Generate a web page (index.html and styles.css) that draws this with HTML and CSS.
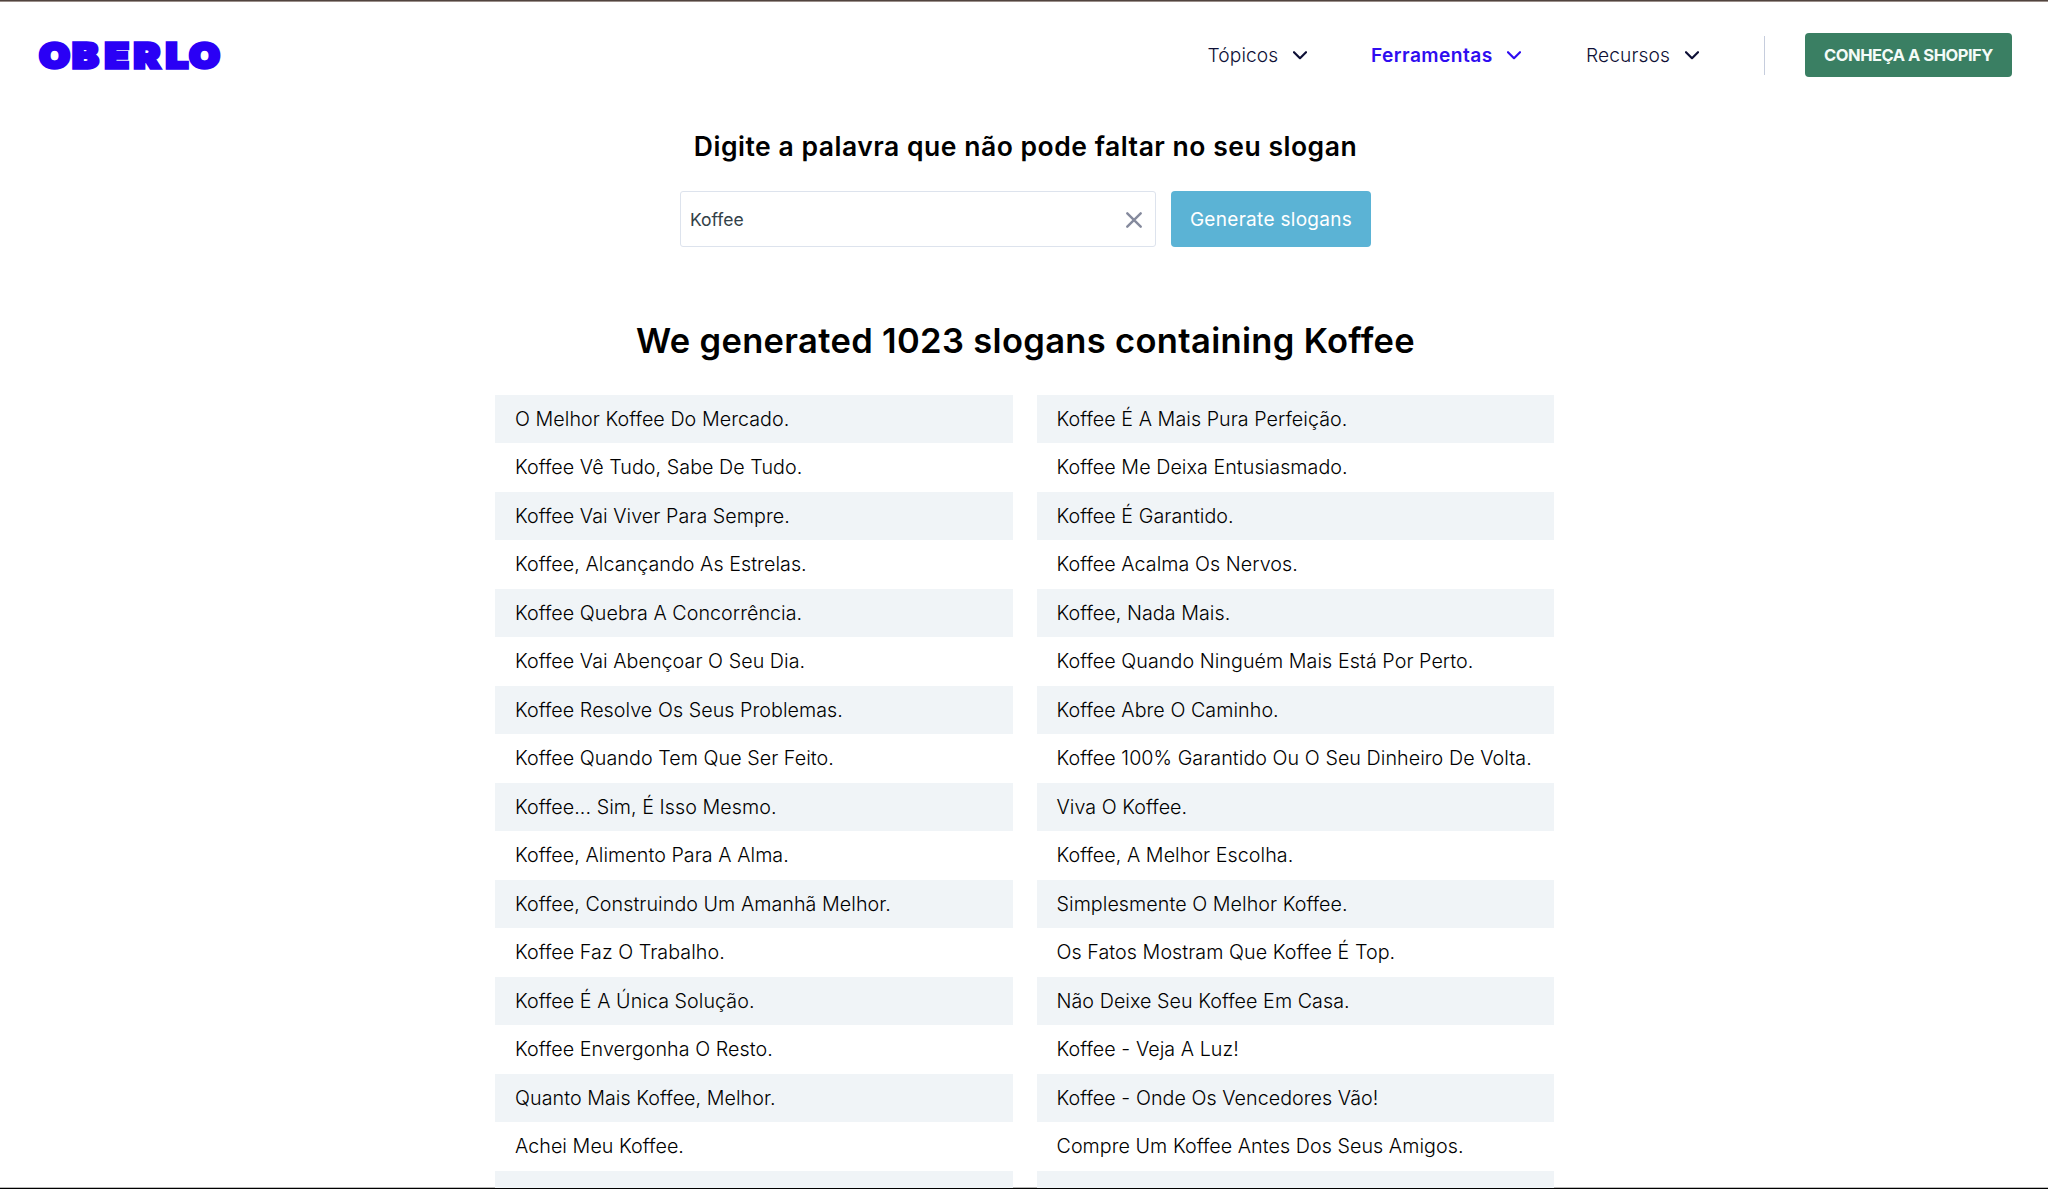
FILE: index.html
```
<!DOCTYPE html>
<html lang="pt">
<head>
<meta charset="utf-8">
<title>Oberlo</title>
<link rel="stylesheet" href="styles.css">
</head>
<body>
<div class="page">
  <header class="header">
    <a class="logo" aria-label="Oberlo">
      <svg width="200" height="52" viewBox="0 0 200 52">
        <text class="logo-text" transform="scale(1.14 1)" y="38.8" x="1.2 30 58.6 84 112.1 132.7">OBERLO</text>
      </svg>
    </a>
    <nav class="nav">
      <a class="nav-item topics"><span>Tópicos</span><svg class="chevron" width="14" height="9" viewBox="0 0 14 9"><path d="M1 1.2 7 7.2 13 1.2"/></svg></a>
      <a class="nav-item tools"><span>Ferramentas</span><svg class="chevron" width="14" height="9" viewBox="0 0 14 9"><path d="M1 1.2 7 7.2 13 1.2"/></svg></a>
      <a class="nav-item resources"><span>Recursos</span><svg class="chevron" width="14" height="9" viewBox="0 0 14 9"><path d="M1 1.2 7 7.2 13 1.2"/></svg></a>
    </nav>
    <span class="divider"></span>
    <a class="cta">CONHEÇA A SHOPIFY</a>
  </header>
  <main class="main">
    <h2 class="prompt">Digite a palavra que não pode faltar no seu slogan</h2>
    <form class="form">
      <div class="field"><span>Koffee</span><svg class="clear" width="16" height="16" viewBox="0 0 16 16"><path d="M1.3 1.3 14.7 14.7M14.7 1.3 1.3 14.7"/></svg></div>
      <button class="generate" type="button">Generate slogans</button>
    </form>
    <h1 class="result">We generated 1023 slogans containing Koffee</h1>
    <div class="slogans">
      <div>O Melhor Koffee Do Mercado.</div><div>Koffee É A Mais Pura Perfeição.</div>
      <div>Koffee Vê Tudo, Sabe De Tudo.</div><div>Koffee Me Deixa Entusiasmado.</div>
      <div>Koffee Vai Viver Para Sempre.</div><div>Koffee É Garantido.</div>
      <div>Koffee, Alcançando As Estrelas.</div><div>Koffee Acalma Os Nervos.</div>
      <div>Koffee Quebra A Concorrência.</div><div>Koffee, Nada Mais.</div>
      <div>Koffee Vai Abençoar O Seu Dia.</div><div>Koffee Quando Ninguém Mais Está Por Perto.</div>
      <div>Koffee Resolve Os Seus Problemas.</div><div>Koffee Abre O Caminho.</div>
      <div>Koffee Quando Tem Que Ser Feito.</div><div>Koffee 100% Garantido Ou O Seu Dinheiro De Volta.</div>
      <div>Koffee... Sim, É Isso Mesmo.</div><div>Viva O Koffee.</div>
      <div>Koffee, Alimento Para A Alma.</div><div>Koffee, A Melhor Escolha.</div>
      <div>Koffee, Construindo Um Amanhã Melhor.</div><div>Simplesmente O Melhor Koffee.</div>
      <div>Koffee Faz O Trabalho.</div><div>Os Fatos Mostram Que Koffee É Top.</div>
      <div>Koffee É A Única Solução.</div><div>Não Deixe Seu Koffee Em Casa.</div>
      <div>Koffee Envergonha O Resto.</div><div>Koffee - Veja A Luz!</div>
      <div>Quanto Mais Koffee, Melhor.</div><div>Koffee - Onde Os Vencedores Vão!</div>
      <div>Achei Meu Koffee.</div><div>Compre Um Koffee Antes Dos Seus Amigos.</div>
      <div></div><div></div>
    </div>
  </main>
</div>
</body>
</html>
```
FILE: styles.css
```
* { box-sizing: border-box; }

body {
  margin: 0;
  background: #fff;
  color: #000;
  font-family: Inter, "Liberation Sans", sans-serif;
}

.page {
  height: 1189px;
  overflow: hidden;
  border-top: 1px solid #51443f;
  border-bottom: 1px solid #000;
  box-shadow: inset 0 1px #9a8f8a, inset 0 -1px #bbb;
}

.header {
  display: flex;
  align-items: center;
  height: 107px;
  padding: 1px 36px 0 38px;
}

.logo { display: flex; margin-right: auto; }

.logo-text {
  font-size: 34.5px;
  font-weight: 900;
  fill: #2a00f5;
  stroke: #2a00f5;
  stroke-width: 3.4px;
  stroke-linejoin: miter;
}

.nav {
  display: flex;
  align-items: center;
  color: #0e1036;
  font-size: 19.2px;
  font-weight: 360;
  letter-spacing: 0.1px;
}

.nav-item { display: flex; align-items: center; justify-content: space-between; }
.topics { width: 99.5px; margin-right: 64px; }
.tools {
  width: 150px;
  margin-right: 65px;
  color: #2f0df0;
  font-weight: 620;
  letter-spacing: 0.42px;
}
.resources { width: 113px; margin-right: 65px; }

.chevron {
  fill: none;
  stroke: currentColor;
  stroke-width: 2.2px;
  stroke-linecap: round;
  stroke-linejoin: round;
}

.divider { width: 1px; height: 39px; margin-right: 40px; background: #c6cddd; }

.cta {
  display: flex;
  align-items: center;
  justify-content: center;
  width: 207px;
  height: 44px;
  border-radius: 4px;
  background: #3a7f63;
  color: #f4fbf8;
  font-size: 16.5px;
  font-weight: 700;
  letter-spacing: -0.48px;
}

.main { display: flex; flex-direction: column; align-items: center; padding-left: 3px; }

.prompt {
  margin: 18px 0 25px;
  font-size: 26.5px;
  line-height: 40px;
  font-weight: 640;
  letter-spacing: 0.52px;
}

.form { display: flex; gap: 15px; margin: 0; }

.field {
  display: flex;
  align-items: center;
  justify-content: space-between;
  width: 476px;
  height: 56px;
  padding: 1px 13px 0 9px;
  border: 1px solid #dde3ed;
  border-radius: 3px;
  color: #334148;
  font-size: 17.5px;
  font-weight: 370;
}

.clear { fill: none; stroke: #858a9d; stroke-width: 2.4px; stroke-linecap: round; }

.generate {
  width: 200px;
  padding: 1px 0 0;
  border: 0;
  border-radius: 4px;
  background: #5bb3d5;
  color: #fff;
  font: inherit;
  font-size: 19px;
  letter-spacing: 0.3px;
}

.result {
  margin: 69px 0 28.5px;
  font-size: 34.5px;
  line-height: 50px;
  font-weight: 620;
  letter-spacing: 0.34px;
}

.slogans {
  display: grid;
  grid-template-columns: 517.5px 517.5px;
  grid-auto-rows: 48.53px;
  column-gap: 24px;
  width: 1059px;
  margin-right: 2px;
}

.slogans div {
  padding-left: 20px;
  font-size: 19.7px;
  font-weight: 360;
  line-height: 49.6px;
  height: 48.53px;
  letter-spacing: 0.05px;
  white-space: nowrap;
}

.slogans div:nth-child(4n + 1),
.slogans div:nth-child(4n + 2) { background: #f0f4f7; }
```
